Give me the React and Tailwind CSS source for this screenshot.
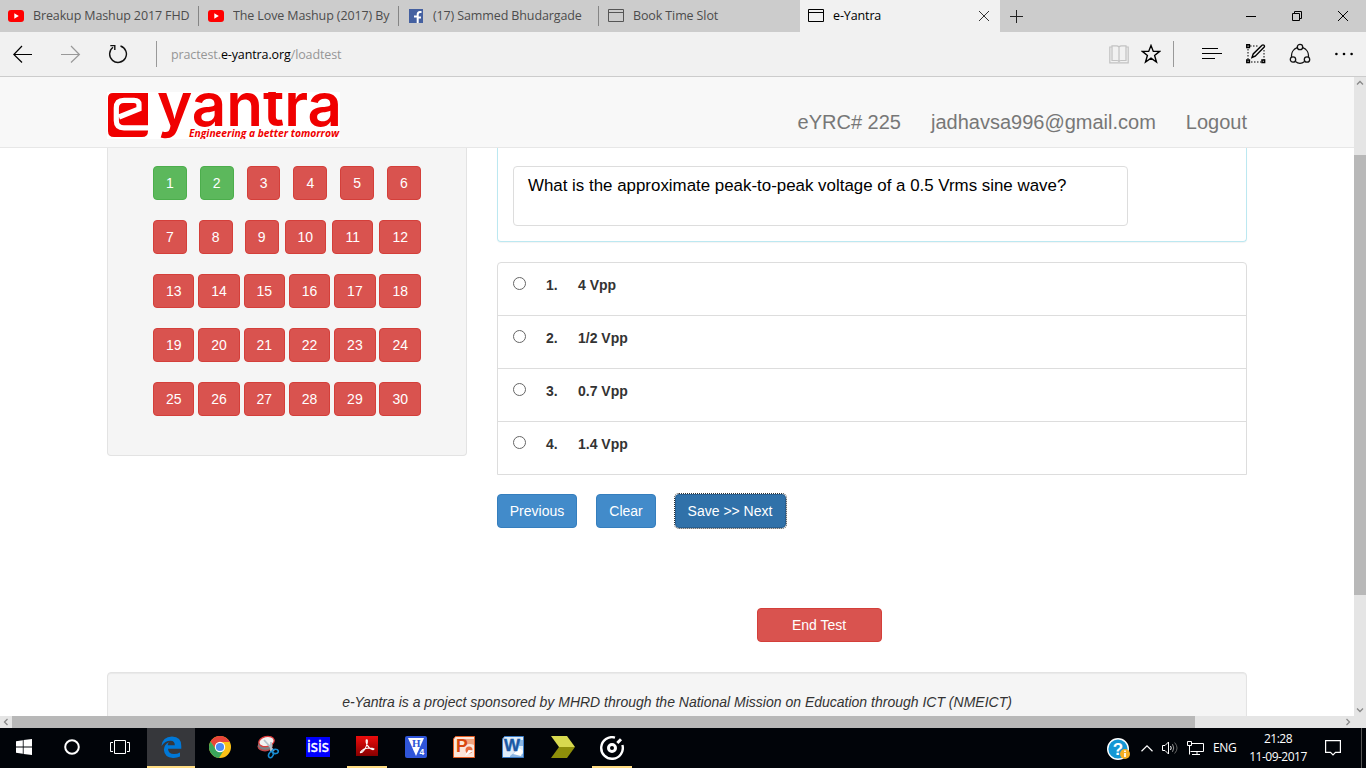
import React from "react";

const YouTube = () => (
  <svg width="16" height="12" viewBox="0 0 16 12" className="shrink-0">
    <rect width="16" height="12" rx="3" fill="#f00" />
    <path d="M6.3 3.3 L10.8 6 L6.3 8.7 Z" fill="#fff" />
  </svg>
);

const Facebook = () => (
  <svg width="14" height="14" viewBox="0 0 14 14" className="mx-px shrink-0">
    <rect width="14" height="14" fill="#4460a0" />
    <path d="M8.7 14 V8.5 H12 M9 7.5 H5 M8.7 8.5 V5.5 Q8.7 3 11 3 H12.5" fill="none" stroke="#fff" strokeWidth="2" />
  </svg>
);

const PageIcon = ({ color }) => (
  <svg width="16" height="13" viewBox="0 0 16 13" className="-mt-px shrink-0" fill="none" stroke={color}>
    <path d="M.5 .5 H15.5 V12.5 H.5 Z M.5 3.5 H15.5" />
  </svg>
);

const tabs = [
  { icon: <YouTube />, title: "Breakup Mashup 2017 FHD" },
  { icon: <YouTube />, title: "The Love Mashup (2017) By" },
  { icon: <Facebook />, title: "(17) Sammed Bhudargade" },
  { icon: <PageIcon color="#555" />, title: "Book Time Slot" },
];

function TabBar() {
  return (
    <div className="flex h-8 w-full shrink-0 bg-[#ccc] text-[12.5px] tracking-[-0.12px] text-[#4c4c4c]">
      {tabs.map((t, i) => (
        <div key={i} className="flex h-8 w-[200px] items-center pl-2">
          {t.icon}
          <span className="ml-[9px] mt-px flex-1 overflow-hidden whitespace-nowrap">{t.title}</span>
          <span className={"h-5 w-px " + (i < 3 ? "bg-[#858585]" : "")} />
          <span className="w-px" />
        </div>
      ))}
      <div className="flex h-8 w-[200px] items-center bg-[#f1f1f1] pl-2 text-black">
        <PageIcon color="#000" />
        <span className="ml-[9px] mt-px flex-1">e-Yantra</span>
        <svg width="10" height="10" viewBox="0 0 10 10" className="mr-[11px]" stroke="#333" fill="none">
          <path d="M0 0 L10 10 M10 0 L0 10" />
        </svg>
      </div>
      <div className="flex flex-1 items-center">
        <svg width="13" height="13" viewBox="0 0 13 13" className="ml-[10px]" stroke="#222" fill="none">
          <path d="M6.5 0 V13 M0 6.5 H13" />
        </svg>
        <div className="ml-auto flex items-center gap-9 pr-[18px]">
          <svg width="10" height="10" viewBox="0 0 10 10" stroke="#000" fill="none">
            <path d="M0 5.5 H10" />
          </svg>
          <svg width="10" height="10" viewBox="0 0 10 10" stroke="#000" fill="none">
            <path d="M.5 2.5 H7.5 V9.5 H.5 Z M2.5 2.5 V.5 H9.5 V7.5 H7.5" />
          </svg>
          <svg width="10" height="10" viewBox="0 0 10 10" stroke="#000" fill="none">
            <path d="M0 0 L10 10 M10 0 L0 10" />
          </svg>
        </div>
      </div>
    </div>
  );
}

function AddressBar() {
  return (
    <div className="flex h-[45px] w-full shrink-0 items-center border-b border-[#ccc] bg-[#f1f1f1]">
      <svg width="20" height="18" viewBox="0 0 20 18" className="ml-[13px]" stroke="#000" strokeWidth="1.2" fill="none">
        <path d="M19 9.5 H.8 M9 1 L.8 9.5 L9 17.5" />
      </svg>
      <svg width="20" height="18" viewBox="0 0 20 18" className="ml-7" stroke="#999" strokeWidth="1.2" fill="none">
        <path d="M0 9.5 H18.4 M10 1 L18.4 9.5 L10 17.5" />
      </svg>
      <svg width="20" height="20" viewBox="0 0 20 20" className="ml-[27px]" stroke="#111" strokeWidth="1.4" fill="none">
        <path d="M12.5 2 A8.4 8.4 0 1 1 5 3.3 M2.3 1.6 H6.8 V6" />
      </svg>
      <div className="ml-7 h-[26px] w-px bg-[#999]" />
      <div className="ml-[14px] mt-[2px] text-[12.5px] tracking-[-0.11px] text-[#969696]">
        practest.<span className="text-black">e-yantra.org</span>/loadtest
      </div>
      <svg width="20" height="19" viewBox="0 0 20 19" className="ml-auto" stroke="#c2c2c2" strokeWidth="1.2" fill="none">
        <path d="M10 17 V2 Q9 .9 7.5 .9 H3 V15.5 H8 Q10 15.5 10 17 Q10 15.5 12 15.5 H17 V.9 H12.5 Q11 .9 10 2 M3 2 H.8 V17.8 H19.2 V2 H17" />
      </svg>
      <svg width="20" height="20" viewBox="0 0 20 20" className="ml-3" stroke="#000" strokeWidth="1.4" fill="none">
        <path d="M10 1.5 L12.3 7.4 H18.6 L13.6 11.4 L15.5 18 L10 14.1 L4.5 18 L6.4 11.4 L1.4 7.4 H7.7 Z" />
      </svg>
      <div className="ml-3 h-[26px] w-px bg-[#999]" />
      <svg width="20" height="12" viewBox="0 0 20 12" className="ml-7 -mt-px" stroke="#000" strokeWidth="1.2" fill="none">
        <path d="M0 .5 H16 M0 5.5 H20 M0 10.5 H13" />
      </svg>
      <svg width="20" height="20" viewBox="0 0 20 20" className="ml-6 -mt-px" stroke="#000" fill="none">
        <path d="M4 2 H13 M2 5 V16 M5 18 H15 M18 6 V16" strokeDasharray="1.5 1.5" />
        <path d="M.8 .8 H3.4 V3.4 H.8 Z M.8 16 H3.4 V18.6 H.8 Z M16 16 H18.6 V18.6 H16 Z" strokeWidth="1.5" />
        <path d="M6 13.5 L7.2 10 L16 1.3 Q17 .5 18 1.3 T18 3.2 L9.2 12.2 Z" strokeWidth="1.4" />
      </svg>
      <svg width="22" height="22" viewBox="0 0 22 22" className="ml-[23px]" stroke="#111" strokeWidth="1.3" fill="none">
        <circle cx="11" cy="4" r="2.7" />
        <circle cx="4" cy="16.5" r="2.7" />
        <circle cx="18" cy="16.5" r="2.7" />
        <path d="M8.2 4.6 A8.8 8.8 0 0 0 2.6 14 M13.8 4.6 A8.8 8.8 0 0 1 19.4 14 M6.4 18.6 Q11 22 15.6 18.6" />
      </svg>
      <svg width="18" height="4" viewBox="0 0 18 4" className="ml-6 mr-[13px]" fill="#000">
        <circle cx="1.4" cy="2" r="1.3" />
        <circle cx="9" cy="2" r="1.3" />
        <circle cx="16.6" cy="2" r="1.3" />
      </svg>
    </div>
  );
}

function Logo() {
  return (
    <svg width="233" height="47" viewBox="0 0 233 47" className="mt-[15px] shrink-0">
      <rect width="233" height="47" fill="#fff" />
      <path d="M6 1 H41 V39 Q41 45 35 45 H7 Q1 45 1 39 V6 Q1 1 6 1 Z" fill="#f00000" />
      <path d="M41 35.8 H17 Q9.3 35.8 9.3 28.5 V16 Q9.3 8.3 17 8.3 H27 Q32 8.3 32 12.5 V17 L12 25" fill="none" stroke="#fff" strokeWidth="5.2" />
      <text x="50" y="34" textLength="185" lengthAdjust="spacingAndGlyphs" fontFamily="Inter, sans-serif" fontWeight="600" fontSize="60" fill="#f00000">yantra</text>
      <rect x="80" y="35" width="153" height="12" fill="#fff" />
      <text x="82" y="44.5" textLength="150" lengthAdjust="spacingAndGlyphs" fontFamily="'Open Sans', sans-serif" fontWeight="700" fontStyle="italic" fontSize="11" fill="#f00000">Engineering a better tomorrow</text>
    </svg>
  );
}

const btn = "flex h-[34px] shrink-0 items-center justify-center rounded-[4px] border text-[14px] leading-5 text-white ";
const red = "border-[#d43f3a] bg-[#d9534f] ";
const green = "border-[#4cae4c] bg-[#5cb85c] ";

const rows = [
  [1, 2, 3, 4, 5, 6],
  [7, 8, 9, 10, 11, 12],
  [13, 14, 15, 16, 17, 18],
  [19, 20, 21, 22, 23, 24],
  [25, 26, 27, 28, 29, 30],
];

function QuestionGrid() {
  return (
    <div className="flex h-[308px] w-[360px] shrink-0 flex-col gap-5 rounded-b-[4px] border border-t-0 border-[#e3e3e3] bg-[#f5f5f5] px-[45px] pt-[18px]">
      {rows.map((r, i) => (
        <div key={i} className="flex w-[267.9px] justify-between">
          {r.map((n) => (
            <button
              key={n}
              className={btn + (n < 3 ? green : red) + (n < 10 ? "w-[33.8px] " : "w-[41.4px] ") + (n === 7 || n === 8 ? "mr-[6px]" : "")}
            >
              {n}
            </button>
          ))}
        </div>
      ))}
    </div>
  );
}

const options = ["4 Vpp", "1/2 Vpp", "0.7 Vpp", "1.4 Vpp"];

function Question() {
  return (
    <div className="flex w-[750px] shrink-0 flex-col">
      <div className="h-[94px] rounded-b-[4px] border border-t-0 border-[#bce8f1] pl-[15px] pt-[18px] shadow-[0_1px_1px_rgba(0,0,0,0.05)]">
        <div className="h-[60px] w-[615px] rounded-[4px] border border-[#ddd] pl-[14px] pt-[7px] text-[16.9px] leading-6 text-black">
          What is the approximate peak-to-peak voltage of a 0.5 Vrms sine wave?
        </div>
      </div>
      <div className="mt-5 rounded-t-[4px] border border-[#ddd]">
        {options.map((o, i) => (
          <div
            key={o}
            className={"flex pl-[15px] pt-3 text-[14px] font-bold leading-5 text-[#333] " + (i ? "h-[53px] border-t border-[#ddd]" : "h-[52px]")}
          >
            <span className="mt-[2px] h-[13px] w-[13px] rounded-full border border-[#666] bg-white" />
            <span className="ml-5 w-8">{i + 1}.</span>
            <span>{o}</span>
          </div>
        ))}
      </div>
      <div className="mt-[19px] flex">
        <button className={btn + "w-20 border-[#357ebd] bg-[#428bca]"}>Previous</button>
        <button className={btn + "ml-[19px] w-[60px] border-[#357ebd] bg-[#428bca]"}>Clear</button>
        <button className={btn + "ml-[19px] w-[111px] border-[#285e8e] bg-[#3071a9] pr-px outline-1 outline-dotted outline-[#333]"}>
          Save &gt;&gt; Next
        </button>
      </div>
      <button className={btn + red + "ml-[260px] mt-20 w-[125px] pr-px"}>End Test</button>
    </div>
  );
}

const Chevron = ({ d }) => (
  <svg width="12" height="12" viewBox="0 0 12 12" fill="none" stroke="#888" strokeWidth="1.3">
    <path d={d} />
  </svg>
);

function Page() {
  return (
    <div className="flex h-[639px] w-[1354px] shrink-0 flex-col overflow-hidden bg-white font-['Liberation_Sans',Arial,sans-serif]">
      <header className="flex h-[71px] shrink-0 border-b border-[#e7e7e7] bg-[#f8f8f8] pl-[107px] pr-[107px]">
        <Logo />
        <nav className="ml-auto flex gap-[30px] pt-[30px] text-[20px] leading-[30px] text-[#777]">
          <span>eYRC# 225</span>
          <span>jadhavsa996@gmail.com</span>
          <span>Logout</span>
        </nav>
      </header>
      <main className="flex h-[524px] shrink-0 items-start gap-[30px] pl-[107px]">
        <QuestionGrid />
        <Question />
      </main>
      <footer className="ml-[107px] h-[80px] w-[1140px] shrink-0 rounded-t-[4px] border border-[#e3e3e3] bg-[#f5f5f5] pt-[19px] text-center text-[14px] italic leading-5 text-[#333] shadow-[inset_0_1px_1px_rgba(0,0,0,0.05)]">
        e-Yantra is a project sponsored by MHRD through the National Mission on Education through ICT (NMEICT)
      </footer>
    </div>
  );
}

const TaskItem = ({ children, className = "w-12 border-transparent" }) => (
  <div className={"flex h-10 items-center justify-center border-b-2 " + className}>{children}</div>
);

function TaskBar() {
  return (
    <div className="flex h-10 w-full shrink-0 bg-[#010409] text-white">
      <TaskItem>
        <svg width="16" height="16" viewBox="0 0 16 16" fill="#fff">
          <path d="M0 2.2 L6.8 1.2 V7.6 H0 Z M7.6 1.1 L16 0 V7.6 H7.6 Z M0 8.4 H6.8 V14.8 L0 13.8 Z M7.6 8.4 H16 V16 L7.6 14.9 Z" />
        </svg>
      </TaskItem>
      <TaskItem>
        <svg width="16" height="16" viewBox="0 0 16 16" fill="none" stroke="#fff" strokeWidth="2">
          <circle cx="8" cy="8" r="6.8" />
        </svg>
      </TaskItem>
      <TaskItem>
        <svg width="20" height="14" viewBox="0 0 20 14" fill="none" stroke="#fff">
          <path d="M4.5 .5 H15.5 V13.5 H4.5 Z M3 2.5 H.5 V11.5 H3 M17 2.5 H19.5 V11.5 H17" />
        </svg>
      </TaskItem>
      <TaskItem className="ml-[3px] w-12 border-[#ffdc82] bg-[#36373b]">
        <svg width="21" height="22" viewBox="0 0 21 22">
          <path d="M.4 10 Q1.5 .5 11 .4 Q20.5 .5 20.3 10 V12.8 H7 Q7.3 18 13 18 Q16.3 18 19 16.5 V20.6 Q16 22 12 21.9 Q3.4 21.5 2.9 13.8 Q3 8.7 8 6.3 Q6.7 7.6 6.7 9.3 H13.8 Q13.8 5 9.8 4.8 Q4.2 4.6 .4 10 Z" fill="#0078d7" />
        </svg>
      </TaskItem>
      <TaskItem className="ml-px w-12 border-transparent">
        <svg width="22" height="22" viewBox="0 0 22 22">
          <circle cx="11" cy="11" r="11" fill="#fbc116" />
          <path d="M11 6 H20.8 L20.5 5.5 A11 11 0 0 0 1.5 5.5 L6.5 13 Z" fill="#e8443a" />
          <path d="M1.5 5.5 A11 11 0 0 0 10 22 L15 14 L7 13.5 Z" fill="#3ba55b" />
          <circle cx="11" cy="11" r="5.2" fill="#fff" />
          <circle cx="11" cy="11" r="4.1" fill="#4c8bf5" />
        </svg>
      </TaskItem>
      <TaskItem className="w-12 border-transparent">
        <svg width="22" height="24" viewBox="0 0 22 24">
          <ellipse cx="8" cy="11.5" rx="7.5" ry="5" fill="#bd4749" />
          <ellipse cx="8.5" cy="10" rx="7.5" ry="4.8" fill="#7b8185" />
          <ellipse cx="9.5" cy="6.5" rx="7.8" ry="5" fill="#f3f3f3" stroke="#de3d3d" strokeWidth="1.3" transform="rotate(-12 9.5 6.5)" />
          <path d="M7 5 L17 16 M14 7 V17" stroke="#b5c2cb" strokeWidth="1.8" />
          <ellipse cx="18.3" cy="16.4" rx="3" ry="2.2" fill="none" stroke="#168bd0" strokeWidth="1.6" />
          <ellipse cx="14" cy="19.6" rx="2.2" ry="3.2" fill="none" stroke="#168bd0" strokeWidth="1.6" transform="rotate(25 14 19.6)" />
        </svg>
      </TaskItem>
      <TaskItem className="ml-[2px] w-12 border-transparent">
        <svg width="24" height="20" viewBox="0 0 24 20">
          <rect width="24" height="20" fill="#00f" />
          <text x="1" y="15" textLength="22" lengthAdjust="spacingAndGlyphs" fill="#fff" stroke="#fff" strokeWidth=".4" fontFamily="'DejaVu Sans', sans-serif" fontSize="15">isis</text>
        </svg>
      </TaskItem>
      <TaskItem className="ml-[5px] w-10 border-[#ffdc82]">
        <svg width="22" height="20" viewBox="0 0 22 20" className="-mt-[2px]">
          <defs>
            <linearGradient id="acro" x2="0" y2="1">
              <stop stopColor="#ed0c0c" />
              <stop offset="1" stopColor="#870000" />
            </linearGradient>
          </defs>
          <rect width="22" height="20" fill="url(#acro)" />
          <path d="M4.5 16 Q7 12.5 11 12.2 Q16 11.6 18 13 Q17 14.6 13.5 12 Q9.5 8 10.2 4 Q11.8 3 11.2 7 Q10 13 6 16.3 Q4 17.3 4.5 16 Z" fill="none" stroke="#fff" strokeWidth="1.1" />
        </svg>
      </TaskItem>
      <TaskItem className="ml-[5px] w-12 border-transparent">
        <svg width="22" height="22" viewBox="0 0 22 22">
          <rect width="22" height="22" rx="2" fill="#2f55d8" />
          <path d="M3 2 H19 L11 20 Z" fill="#fff" />
          <text x="7" y="11" fontSize="11" fontWeight="700" fontFamily="'Liberation Serif', serif" fill="#2f55d8">H</text>
          <text x="14.5" y="19" fontSize="8.5" fontWeight="700" fontFamily="'Liberation Sans', sans-serif" fill="#fff">4</text>
        </svg>
      </TaskItem>
      <TaskItem>
        <svg width="22" height="22" viewBox="0 0 22 22" className="overflow-visible">
          <path d="M2.5 .5 H21.5 V21.5 H.5 V3 Z" fill="#fbe6da" stroke="#e35c22" />
          <path d="M12 3 H21 V9 Q17 7 12 9 Z" fill="#f2a47e" />
          <circle cx="16" cy="14" r="3.5" fill="#e86b3c" />
          <path d="M15.5 14 L21 14.5 L12 20 Z" fill="#fff" />
          <text x="3" y="16" fontSize="17.5" fontWeight="800" fontFamily="'Liberation Sans', sans-serif" fill="#d9470e">P</text>
        </svg>
      </TaskItem>
      <TaskItem className="ml-px w-12 border-transparent">
        <svg width="22" height="22" viewBox="0 0 22 22" className="overflow-visible">
          <path d="M2.5 .5 H21.5 V21.5 H.5 V3 Z" fill="#dfedfa" stroke="#3b7cc5" />
          <path d="M8 20 L14 15 L21 18 V21 H8 Z M15 4 H21 V10 H17 Z" fill="#8bb6e3" />
          <path d="M11 18 L17 12 L21 15 L19 20 Z" fill="#fff" />
          <text x="2" y="15" textLength="16" lengthAdjust="spacingAndGlyphs" fontSize="16" fontWeight="700" fontFamily="'Liberation Sans', sans-serif" fill="#1a59a5" stroke="#1a59a5" strokeWidth=".4">W</text>
        </svg>
      </TaskItem>
      <TaskItem className="ml-[2px] w-12 border-transparent">
        <svg width="24" height="22" viewBox="0 0 24 22">
          <path d="M0 0 H16 L24 11 H8 Z" fill="#d7d94f" />
          <path d="M8 11 H24 L16 22 H0 Z" fill="#8e8f0a" />
        </svg>
      </TaskItem>
      <TaskItem className="ml-[5px] w-10 border-[#ffdc82]">
        <svg width="24" height="24" viewBox="0 0 24 24" className="mt-[2px]" fill="none" stroke="#fff">
          <path d="M15 1.6 A10.8 10.8 0 1 0 22.4 9" strokeWidth="2.4" />
          <circle cx="12" cy="12" r="3.5" strokeWidth="3" />
          <path d="M17.3 7 L21 3.2" strokeWidth="3" />
        </svg>
      </TaskItem>
      <div className="ml-auto flex items-center">
        <svg width="24" height="24" viewBox="0 0 24 24" className="mt-1">
          <circle cx="11" cy="11" r="10.3" fill="#1597d4" stroke="#fff" strokeWidth="1.4" />
          <text x="5.7" y="17" fontSize="17" fontWeight="700" fontFamily="'Liberation Sans', sans-serif" fill="#fff">?</text>
          <circle cx="18" cy="16" r="5" fill="#f4ae23" />
          <path d="M18 15 V19 M18 12.5 V14" stroke="#fff" strokeWidth="1.7" />
        </svg>
        <svg width="12" height="7" viewBox="0 0 12 7" className="ml-[10px]" fill="none" stroke="#fff" strokeWidth="1.2">
          <path d="M.5 6.3 L6 .9 L11.5 6.3" />
        </svg>
        <svg width="17" height="14" viewBox="0 0 17 14" className="ml-[9px]" fill="none" stroke="#fff">
          <path d="M.5 4.5 H3 L6.5 1 V13 L3 9.5 H.5 Z M8.5 5 Q10 7 8.5 9" />
          <path d="M10.5 3.2 Q13 7 10.5 10.8" stroke="#999" />
          <path d="M12.6 1.5 Q17.5 7 12.6 12.5" stroke="#666" />
        </svg>
        <svg width="17" height="14" viewBox="0 0 17 14" className="ml-2" fill="none" stroke="#fff">
          <path d="M5 2.5 H16.5 V10.5 H3.5 M10 10.5 V13.5 M5 13.5 H13 M.5 .5 H4.5 V4.5 H.5 Z M2.5 4.5 V13.5" />
        </svg>
        <span className="ml-[9px] inline-block w-[24px] text-[12px] tracking-[-0.4px]">ENG</span>
        <div className="ml-[10px] flex w-[62px] flex-col items-center text-[12px] leading-[18px] tracking-[-0.5px]">
          <span>21:28</span>
          <span>11-09-2017</span>
        </div>
        <svg width="16" height="16" viewBox="0 0 16 16" className="ml-[16px] mr-5" fill="none" stroke="#fff" strokeWidth="1.2">
          <path d="M.6 .6 H15.4 V12.4 H10.5 L8 15 L5.5 12.4 H.6 Z" />
        </svg>
        <div className="mr-1 h-10 w-px bg-[#555]" />
      </div>
    </div>
  );
}

export default function App() {
  return (
    <div className="flex h-[768px] w-[1366px] flex-col overflow-hidden bg-white font-['Open_Sans','Noto_Sans',sans-serif]">
      <TabBar />
      <AddressBar />
      <div className="flex h-[639px] shrink-0">
        <Page />
        <div className="flex h-full w-3 flex-col bg-[#e5e5e5]">
          <Chevron d="M3 7.5 L6 4.5 L9 7.5" />
          <div className="mt-[66px] h-[440px] bg-[#b8b8b8]" />
          <div className="mt-auto">
            <Chevron d="M3 4.5 L6 7.5 L9 4.5" />
          </div>
        </div>
      </div>
      <div className="flex h-3 shrink-0 bg-[#e5e5e5]">
        <Chevron d="M7.5 3 L4.5 6 L7.5 9" />
        <div className="w-[1183px] bg-[#b8b8b8]" />
        <div className="ml-auto mr-3">
          <Chevron d="M4.5 3 L7.5 6 L4.5 9" />
        </div>
      </div>
      <TaskBar />
    </div>
  );
}
